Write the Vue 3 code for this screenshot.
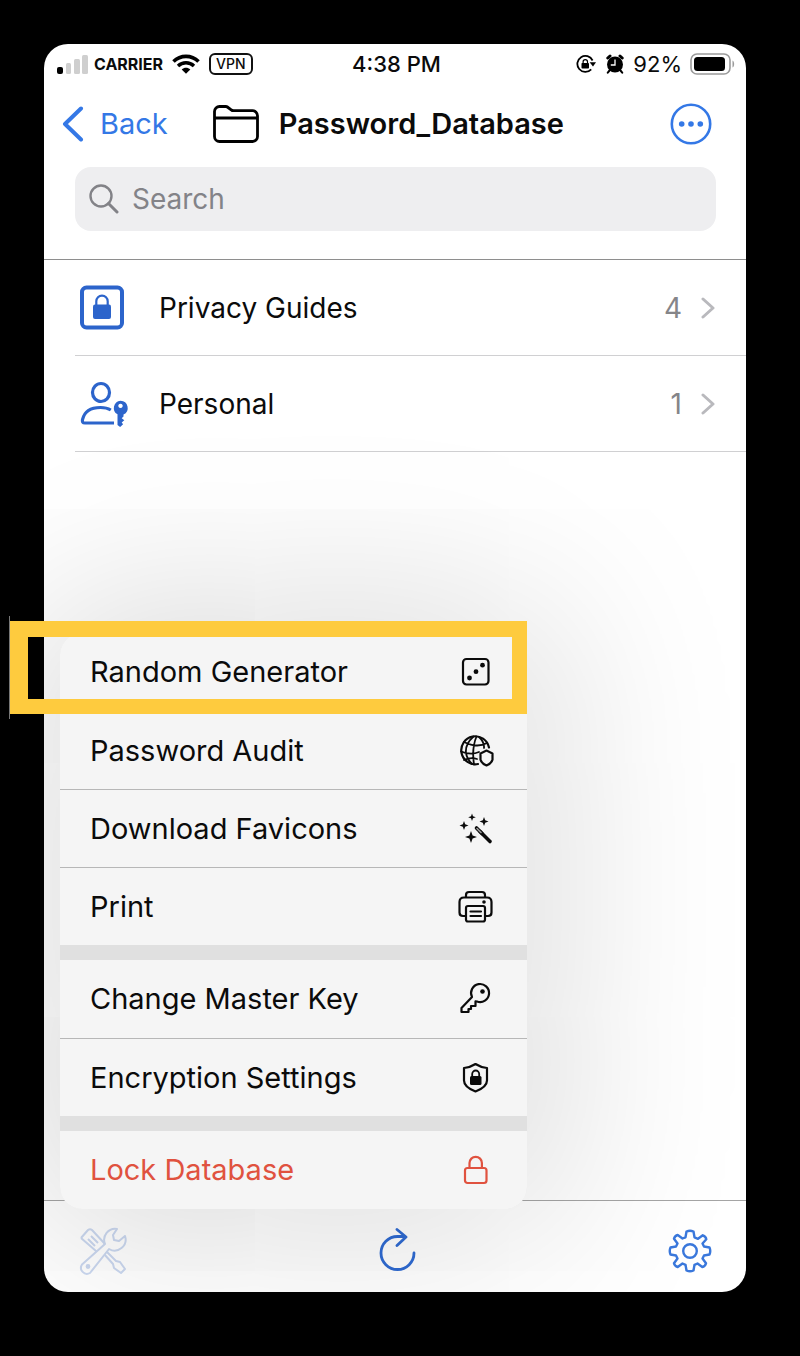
<script setup>
import { ref } from 'vue'

const query = ref('')

const groups = [
  { name: 'Privacy Guides', count: 4, icon: 'lock' },
  { name: 'Personal', count: 1, icon: 'person' },
]

const sections = [
  [
    { label: 'Random Generator', icon: 'dice' },
    { label: 'Password Audit', icon: 'globe' },
    { label: 'Download Favicons', icon: 'wand' },
    { label: 'Print', icon: 'printer' },
  ],
  [
    { label: 'Change Master Key', icon: 'key' },
    { label: 'Encryption Settings', icon: 'shield' },
  ],
  [{ label: 'Lock Database', icon: 'padlock', danger: true }],
]
</script>

<template>
  <div class="page">
    <div class="phone">
      <div class="status">
        <div class="status-side">
          <svg width="32" height="20" viewBox="0 0 32 20" aria-hidden="true">
            <rect x="0" y="13" width="6" height="7" rx="2" fill="#000" />
            <rect x="9" y="9" width="5" height="11" rx="1.5" fill="#cfcfcf" />
            <rect x="17" y="5" width="6" height="15" rx="1.5" fill="#cfcfcf" />
            <rect x="25" y="1" width="6" height="19" rx="1.5" fill="#cfcfcf" />
          </svg>
          <span class="carrier">CARRIER</span>
          <svg class="wifi" width="28" height="20" viewBox="0 0 28 20" aria-hidden="true">
            <path d="M1.5 7.5C8.5.6 19.5.6 26.5 7.5" fill="none" stroke="#000" stroke-width="3.6" />
            <path d="M6 12C10.5 7.7 17.5 7.7 22 12" fill="none" stroke="#000" stroke-width="3.4" />
            <path d="M9.7 15.5C12.2 13.2 15.8 13.2 18.3 15.5L14 19.8Z" fill="#000" />
          </svg>
          <span class="vpn">VPN</span>
        </div>
        <span class="time">4:38 PM</span>
        <div class="status-side end">
          <svg width="20" height="20" viewBox="0 0 20 20" aria-hidden="true">
            <path d="M16.6 6.5A8 8 0 1 0 15.2 15.4" fill="none" stroke="#000" stroke-width="1.8" />
            <path d="M13.6 8.2H20L17 12.6Z" fill="#000" />
            <rect x="5.5" y="9" width="7.5" height="5.6" rx=".8" fill="#000" />
            <path d="M7.1 9.5V7.8a2.2 2.2 0 0 1 4.4 0v1.7" fill="none" stroke="#000" stroke-width="1.2" />
          </svg>
          <svg class="alarm" width="18" height="20" viewBox="0 0 18 20" aria-hidden="true">
            <circle cx="9" cy="10.5" r="8" fill="#000" />
            <path d="M1.8 4L4 2M16.2 4L14 2" stroke="#000" stroke-width="3" stroke-linecap="round" />
            <path d="M3.5 16.5L1.8 18.6M14.5 16.5L16.2 18.6" stroke="#000" stroke-width="2" stroke-linecap="round" />
            <path d="M9 5.5V11H4.8" fill="none" stroke="#fff" stroke-width="1.3" />
          </svg>
          <span class="percent">92%</span>
          <svg width="46" height="22" viewBox="0 0 46 22" aria-hidden="true">
            <rect x="1" y="1" width="39" height="20" rx="6" fill="none" stroke="#9b9b9b" stroke-width="1.6" />
            <rect x="4" y="4" width="31" height="14" rx="3.5" fill="#000" />
            <path d="M42.5 7.5c2.2 1 2.2 6 0 7z" fill="#9b9b9b" />
          </svg>
        </div>
      </div>

      <header class="nav">
        <a class="back" href="#">
          <svg width="22" height="36" viewBox="0 0 22 36" aria-hidden="true">
            <path d="M19 2.5L3 18L19 33.5" fill="none" stroke="currentColor" stroke-width="4" stroke-linecap="round" stroke-linejoin="round" />
          </svg>
          <span>Back</span>
        </a>
        <svg class="folder" width="46" height="38" viewBox="0 0 46 38" aria-hidden="true">
          <path d="M1.5 6.5a5 5 0 0 1 5-5h6.5c2.5 0 4.2 4.2 7.5 4.2h19a5 5 0 0 1 5 5V31.5a5 5 0 0 1-5 5h-33a5 5 0 0 1-5-5ZM1.5 13H44.5" fill="none" stroke="#000" stroke-width="2.8" />
        </svg>
        <h1>Password_Database</h1>
        <button class="more" type="button" aria-label="More">
          <svg width="42" height="42" viewBox="0 0 42 42" aria-hidden="true">
            <circle cx="21" cy="21" r="19.2" fill="none" stroke="currentColor" stroke-width="2.6" />
            <circle cx="11.7" cy="21" r="2.8" fill="currentColor" />
            <circle cx="21" cy="21" r="2.8" fill="currentColor" />
            <circle cx="30.3" cy="21" r="2.8" fill="currentColor" />
          </svg>
        </button>
      </header>

      <div class="search-wrap">
        <label class="search">
          <svg width="30" height="30" viewBox="0 0 30 30" aria-hidden="true">
            <circle cx="12" cy="12" r="10.5" fill="none" stroke="#828287" stroke-width="2.4" />
            <path d="M19.5 19.5L28 28" stroke="#828287" stroke-width="3" stroke-linecap="round" />
          </svg>
          <input v-model="query" type="search" placeholder="Search" aria-label="Search" />
        </label>
      </div>

      <main class="groups">
        <a v-for="group in groups" :key="group.name" class="group" href="#">
          <svg v-if="group.icon === 'lock'" class="group-icon" width="50" height="46" viewBox="0 0 50 46" aria-hidden="true">
            <rect x="2" y="2.5" width="40" height="40" rx="4.5" fill="none" stroke="#2c64cb" stroke-width="4" />
            <rect x="13" y="19.5" width="18" height="14.5" rx="2" fill="#2c64cb" />
            <path d="M16.3 20.5v-4.2a5.7 5.7 0 0 1 11.4 0V20.5" fill="none" stroke="#2c64cb" stroke-width="2.2" />
          </svg>
          <svg v-else class="group-icon" width="50" height="46" viewBox="0 0 50 46" aria-hidden="true">
            <g fill="none" stroke="#2c64cb" stroke-width="3.2">
              <ellipse cx="21" cy="11.5" rx="8.5" ry="9" />
              <path d="M34 42H5c-2.4 0-3-1.3-2.5-3.4C4.5 30 12 26.5 20.5 26.5c4 0 7.5.8 10.3 2.5" />
            </g>
            <path fill-rule="evenodd" d="M40.5 19.7a7.3 7.3 0 0 1 3 13.9v2l-1.8 1.6 2.6 2-2.6 2.2 1.4 1.8-3 2.8-2.6-2V33.3A7.3 7.3 0 0 1 40.5 19.7Zm0 3a2.2 2.2 0 1 0 .01 0Z" fill="#2c64cb" />
          </svg>
          <span class="group-name">{{ group.name }}</span>
          <span class="count">{{ group.count }}</span>
          <svg width="14" height="22" viewBox="0 0 14 22" aria-hidden="true">
            <path d="M2 2L12 11L2 20" fill="none" stroke="#b9b9bd" stroke-width="3" stroke-linecap="round" stroke-linejoin="round" />
          </svg>
        </a>
      </main>

      <footer class="toolbar">
        <button type="button" aria-label="Tools">
          <svg width="48" height="48" viewBox="0 0 48 48" fill="none" stroke="#cbd8f0" stroke-width="2" stroke-linejoin="round" aria-hidden="true">
            <path d="M2 11L9 3q2-1.5 4 0L26 17l-4 10q-3-1-5-3L2 11" />
            <path d="M9 12L16 19M12 9L19 16" />
            <path d="M25 27L34 37l1 4 7 5 4-4-5-7-4-1-10-10" />
            <path d="M38 2a11 11 0 0 0-12 15L3 37.5a6 6 0 0 0 8 8.5L30 22a11 11 0 0 0 16-13l-6 5-5-1-1-5Z" fill="#fff" />
            <circle cx="9" cy="39.5" r="1.4" fill="#cbd8f0" />
          </svg>
        </button>
        <button type="button" aria-label="Refresh">
          <svg width="38" height="46" viewBox="0 0 38 46" fill="none" stroke="#2f6bd3" stroke-width="2.8" stroke-linecap="round" stroke-linejoin="round" aria-hidden="true">
            <path d="M35 25A16.5 16.5 0 1 1 18.5 8.5H26M18 1.5L27 9L18 17.5" />
          </svg>
        </button>
        <button type="button" aria-label="Settings">
          <svg width="44" height="44" viewBox="0 0 44 44" fill="none" stroke="#3a78dc" stroke-width="2.4" stroke-linejoin="round" aria-hidden="true">
            <path d="M18.5 2.5Q22 1 25.5 2.5L26.5 8.3L30 9.8L34.8 6.3Q38 7.5 38.3 10.3L34.5 14.5L36 17.5L41.5 18.5Q43 22 41.5 25.5L36 26.5L34.5 29.5L38 34.3Q37 37.5 34.3 38L29.5 34.5L26.5 35.8L25.5 41.5Q22 43 18.5 41.5L17.5 35.8L14.5 34.5L9.7 38Q6.5 37 6 34.3L9.5 29.5L8 26.5L2.5 25.5Q1 22 2.5 18.5L8 17.5L9.5 14.5L6 9.7Q7 6.5 9.7 6L14.5 9.5L17.5 8.3Z" />
            <circle cx="22" cy="22" r="6.8" />
          </svg>
        </button>
      </footer>

      <div class="shade"><div class="glow"></div></div>

      <div class="menu" role="menu">
        <div v-for="(section, i) in sections" :key="i" class="section">
          <button v-for="item in section" :key="item.label" type="button" role="menuitem" class="item" :class="{ danger: item.danger }">
            <span>{{ item.label }}</span>
            <svg v-if="item.icon === 'dice'" class="glyph" viewBox="0 0 36 36">
              <rect x="5" y="5" width="25.5" height="25.5" rx="3.5" />
              <g class="solid"><circle cx="11.5" cy="24" r="2.4" /><circle cx="18" cy="17.7" r="2.4" /><circle cx="24.5" cy="11.2" r="2.4" /></g>
            </svg>
            <svg v-else-if="item.icon === 'globe'" class="glyph" viewBox="0 0 36 36">
              <path d="M20 31A14 14 0 1 1 31 14.5" />
              <path class="thin" d="M6 9q13 6.5 23 1M3 18.5q10 4 18 .5M6 27q7-3 13-1M15.5 3.5Q7 11 8 20q1 6 6 11M18.5 3.5q-5 12-2.5 28M21 4q5.5 5 5 11" />
              <path d="M28.5 17.5l6 3v6.3q-1 3.6-6 5.7q-5-2.1-6-5.7v-6.3Z" />
            </svg>
            <svg v-else-if="item.icon === 'wand'" class="glyph" viewBox="0 0 36 36">
              <path class="solid" d="M14 2.5l1 2.8 2.8 1-2.8 1-1 2.8-1-2.8-2.8-1 2.8-1ZM26 6l1.2 3.3 3.3 1.2-3.3 1.2L26 15l-1.2-3.3-3.3-1.2 3.3-1.2ZM6 10l1.2 3.3 3.3 1.2-3.3 1.2L6 19l-1.2-3.3L1.5 14.5l3.3-1.2ZM13 20l1.6 4.4 4.4 1.6-4.4 1.6L13 32l-1.6-4.4L7 26l4.4-1.6Z" />
              <path d="M22 20.5L32 30.5" class="stick" />
              <path d="M18.5 17L24 22.5" class="stick" />
              <path class="core" d="M19 17.5L23 21.5" />
            </svg>
            <svg v-else-if="item.icon === 'printer'" class="glyph" viewBox="0 0 36 36">
              <path d="M8 8V6q0-3 3-3h13q3 0 3 3v2M8 27H5q-3.5 0-3.5-3.5V13Q1.5 8.5 6 8.5H29Q33.5 8.5 33.5 13V23.5Q33.5 27 30 27H27" />
              <rect x="8" y="17" width="19" height="15.5" rx="2" />
              <path d="M12.5 22.5H23M12.5 27H23" />
              <circle class="solid" cx="26" cy="13" r="1.8" />
            </svg>
            <svg v-else-if="item.icon === 'key'" class="glyph" viewBox="0 0 36 36">
              <path d="M14 16A9 9 0 1 1 19 20.5L17.5 20.3V25H13V28H10.5V31H3.5V27Z" />
              <circle class="solid" cx="24.5" cy="10.5" r="2.3" />
            </svg>
            <svg v-else-if="item.icon === 'shield'" class="glyph" viewBox="0 0 36 36">
              <path d="M17.5 4Q23 7.5 29 8V20.5Q29 27 17.5 31.5Q6 27 6 20.5V8Q12 7.5 17.5 4Z" />
              <rect class="solid" x="12" y="16" width="11.5" height="9" rx="1.5" />
              <path class="thin" d="M14.2 16.5v-2.5a3.5 3.5 0 0 1 7 0V16.5" />
            </svg>
            <svg v-else class="glyph" viewBox="0 0 36 36">
              <rect x="7" y="16" width="21.5" height="15" rx="2.5" />
              <path d="M11.5 16v-5a6.2 6.2 0 0 1 12.4 0v5" />
            </svg>
          </button>
        </div>
        <div class="marker" aria-hidden="true"></div>
      </div>
    </div>
  </div>
</template>

<style>
body {
  background: #000;
}
</style>

<style scoped>
* {
  box-sizing: border-box;
}
.page {
  display: flex;
  min-height: 100vh;
  padding: 44px 54px 64px 44px;
  background: #000;
  color: #0b0b0b;
  font-family: Inter, "Liberation Sans", sans-serif;
  font-size: 28px;
  line-height: 36px;
}
button {
  margin: 0;
  padding: 0;
  border: 0;
  background: none;
  font: inherit;
  color: inherit;
}
a {
  color: inherit;
  text-decoration: none;
}
svg {
  display: block;
  flex: none;
}
.phone {
  position: relative;
  display: flex;
  flex: 1;
  flex-direction: column;
  min-width: 0;
  border-radius: 24px;
  background: #fff;
}
.status {
  display: grid;
  grid-template-columns: 1fr auto 1fr;
  align-items: center;
  height: 40px;
  padding: 0 10px 0 13px;
  line-height: 24px;
}
.status-side {
  display: flex;
  align-items: center;
}
.end {
  justify-content: flex-end;
}
.carrier {
  margin-left: 5px;
  font-size: 16px;
  font-weight: 700;
}
.wifi {
  margin: 0 9px;
}
.vpn {
  padding: 0 5px;
  border: 2px solid #111;
  border-radius: 6px;
  font-size: 14px;
  font-weight: 500;
  line-height: 18px;
}
.time {
  font-size: 22px;
  font-weight: 500;
}
.alarm {
  margin: 0 9px 0 10px;
}
.percent {
  margin-right: 8px;
  font-size: 22px;
}
.nav {
  display: flex;
  align-items: center;
  height: 80px;
  padding: 0 34px 0 18px;
}
.back {
  display: flex;
  align-items: center;
  gap: 16px;
  color: #3478e6;
  font-size: 29px;
}
.folder {
  margin: 0 20px 0 45px;
}
h1 {
  flex: 1;
  margin: 0;
  font-size: 29px;
  font-weight: 600;
}
.more {
  color: #3478e6;
}
.search-wrap {
  padding: 3px 30px 28px 31px;
  border-bottom: 1px solid #8e8e8e;
}
.search {
  display: flex;
  align-items: center;
  gap: 13px;
  height: 64px;
  padding: 0 14px;
  border-radius: 16px;
  background: #eeeef0;
}
.search input {
  flex: 1;
  min-width: 0;
  padding: 0;
  border: 0;
  outline: 0;
  background: none;
  color: #333;
  font: inherit;
}
.search input::placeholder {
  color: #838388;
  opacity: 1;
}
.groups {
  flex: 1;
  padding-left: 31px;
}
.group {
  display: flex;
  align-items: center;
  height: 96px;
  padding: 0 31px 0 5px;
  border-bottom: 1px solid #d0d0d2;
}
.group-icon {
  margin-right: 29px;
}
.group-name {
  flex: 1;
}
.count {
  margin-right: 19px;
  color: #858589;
}
.toolbar {
  display: flex;
  align-items: center;
  justify-content: space-between;
  height: 92px;
  padding: 8px 34px 0 32px;
  border-top: 1px solid #a5a5a5;
}
.toolbar button:first-child {
  padding-left: 3px;
}
.shade {
  position: absolute;
  inset: 0;
  overflow: hidden;
  border-radius: 24px;
  pointer-events: none;
}
.glow {
  position: absolute;
  bottom: 83px;
  left: 16px;
  width: 467px;
  height: 576px;
  border-radius: 22px;
  box-shadow: 0 0 190px 30px rgba(0, 0, 0, 0.15);
}
.menu {
  position: absolute;
  bottom: 83px;
  left: 16px;
  display: flex;
  flex-direction: column;
  gap: 15px;
  width: 467px;
  border-radius: 22px;
  background: #e0e0e0;
  font-size: 29px;
}
.section {
  background: #f5f5f5;
}
.section:first-child {
  border-radius: 22px 22px 0 0;
}
.section:nth-child(3) {
  border-radius: 0 0 22px 22px;
}
.item {
  display: flex;
  align-items: center;
  justify-content: space-between;
  width: 100%;
  height: 78px;
  padding: 0 33px 0 30px;
  text-align: left;
}
.item + .item {
  border-top: 1px solid #b7b7b7;
}
.danger {
  color: #e0523f;
}
.glyph {
  width: 36px;
  height: 36px;
  fill: none;
  stroke: currentColor;
  stroke-width: 2.2;
  stroke-linecap: round;
  stroke-linejoin: round;
}
.thin {
  stroke-width: 1.8;
}
.solid {
  fill: currentColor;
  stroke: none;
}
.stick {
  stroke-width: 3.6;
}
.core {
  stroke: #999;
  stroke-width: 1.6;
}
.marker {
  position: absolute;
  top: -12px;
  right: 0;
  left: -50px;
  height: 93px;
  border: solid #fecb3e;
  border-width: 16px 15px 15px 18px;
}
.marker::before {
  content: "";
  position: absolute;
  top: -21px;
  bottom: -20px;
  left: -19px;
  width: 1px;
  background: #777;
}
</style>
